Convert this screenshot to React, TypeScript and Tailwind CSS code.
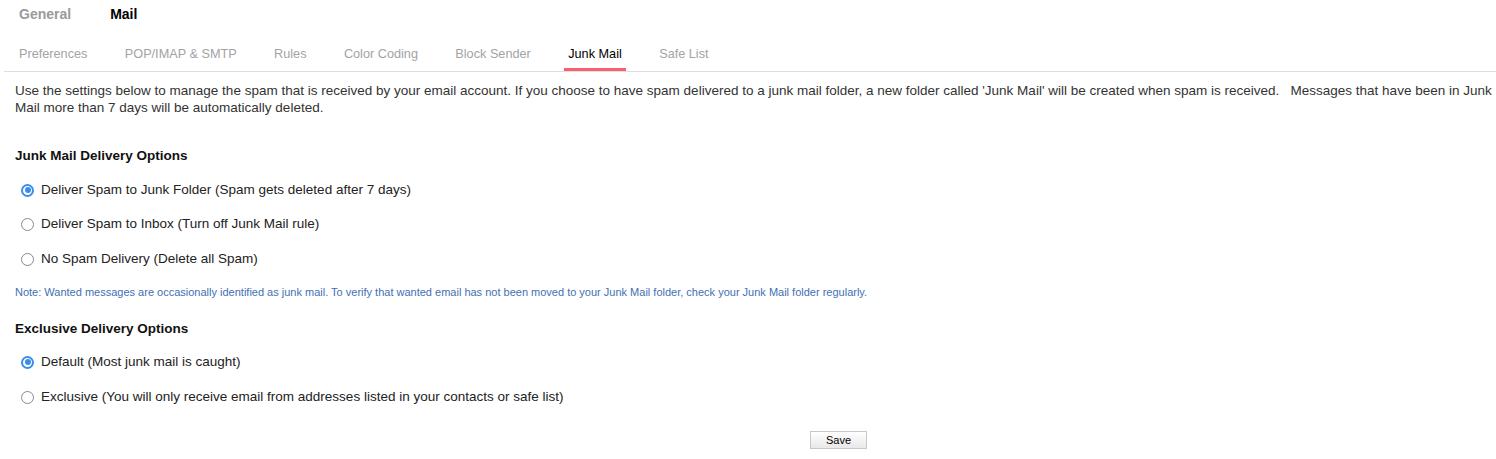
import { useState } from "react"

const tabs = ["Preferences", "POP/IMAP & SMTP", "Rules", "Color Coding", "Block Sender", "Junk Mail", "Safe List"]

const junkOptions = [
  "Deliver Spam to Junk Folder (Spam gets deleted after 7 days)",
  "Deliver Spam to Inbox (Turn off Junk Mail rule)",
  "No Spam Delivery (Delete all Spam)",
]

const exclusiveOptions = [
  "Default (Most junk mail is caught)",
  "Exclusive (You will only receive email from addresses listed in your contacts or safe list)",
]

function Radio({ checked }: { checked: boolean }) {
  return checked ? (
    <span className="flex h-[13px] w-[13px] items-center justify-center rounded-full border-[2px] border-[#3b8eea] bg-white">
      <span className="h-[6px] w-[6px] rounded-full bg-[#3b8eea]" />
    </span>
  ) : (
    <span className="h-[13px] w-[13px] rounded-full border border-[#8a8a8a] bg-white" />
  )
}

function RadioRow({ label, checked, onClick }: { label: string; checked: boolean; onClick: () => void }) {
  return (
    <label onClick={onClick} className="flex h-[20px] cursor-pointer items-center pl-[21px] text-[13.5px] text-[#222]">
      <Radio checked={checked} />
      <span className="ml-[7px]">{label}</span>
    </label>
  )
}

export default function App() {
  const [junk, setJunk] = useState(0)
  const [exclusive, setExclusive] = useState(0)

  return (
    <div className="min-h-screen bg-white font-['Liberation_Sans',Arial,sans-serif]">
      {/* top level tabs */}
      <div className="flex h-[27px] items-center pt-[1px] text-[14px] font-bold">
        <span className="ml-[19px] text-[#9a9a9a]">General</span>
        <span className="ml-[39px] text-black">Mail</span>
      </div>

      {/* sub tabs */}
      <div className="ml-[4px] mt-[14px] flex h-[31px] gap-[37.4px] border-b border-[#dedede] pl-[15px] text-[12.7px]">
        {tabs.map((t) => (
          <div key={t} className="relative flex h-full flex-col items-center">
            <span className={`pt-[4px] ${t === "Junk Mail" ? "text-black" : "text-[#a3a3a3]"}`}>{t}</span>
            {t === "Junk Mail" && <span className="absolute bottom-0 left-[-4px] right-[-4px] h-[3px] bg-[#f9606f]" />}
          </div>
        ))}
      </div>

      <p className="mt-[10px] pl-[15px] pr-[4px] text-[13.5px] leading-[17px] text-[#333] whitespace-pre-wrap">
        Use the settings below to manage the spam that is received by your email account. If you choose to have spam delivered to a junk mail folder, a new folder called 'Junk Mail' will be created when spam is received.   Messages that have been in Junk Mail more than 7 days will be automatically deleted.
      </p>

      <h3 className="mt-[31px] pl-[15px] text-[13.5px] font-bold leading-[17px] text-[#111]">Junk Mail Delivery Options</h3>
      <div className="mt-[16px] flex flex-col gap-[14.5px]">
        {junkOptions.map((o, i) => (
          <RadioRow key={o} label={o} checked={junk === i} onClick={() => setJunk(i)} />
        ))}
      </div>

      <p className="mt-[17px] pl-[15px] text-[11px] leading-[13px] text-[#3f6fb5]">
        Note: Wanted messages are occasionally identified as junk mail. To verify that wanted email has not been moved to your Junk Mail folder, check your Junk Mail folder regularly.
      </p>

      <h3 className="mt-[21px] pl-[15px] text-[13.5px] font-bold leading-[17px] text-[#111]">Exclusive Delivery Options</h3>
      <div className="mt-[15px] flex flex-col gap-[15px]">
        {exclusiveOptions.map((o, i) => (
          <RadioRow key={o} label={o} checked={exclusive === i} onClick={() => setExclusive(i)} />
        ))}
      </div>

      <div className="mt-[20px] pl-[810px]">
        <button
          type="button"
          className="h-[18px] w-[57px] border border-[#c8c8c8] bg-gradient-to-b from-white to-[#e8e8e8] text-[11px] text-black"
        >
          Save
        </button>
      </div>
    </div>
  )
}
